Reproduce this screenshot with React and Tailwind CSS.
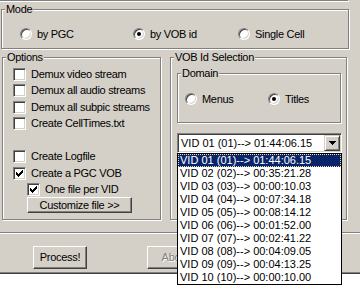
import React from "react";

const vids = [
  ["01", "01:44:06.15"],
  ["02", "00:35:21.28"],
  ["03", "00:00:10.03"],
  ["04", "00:07:34.18"],
  ["05", "00:08:14.12"],
  ["06", "00:01:52.00"],
  ["07", "00:02:41.22"],
  ["08", "00:04:09.05"],
  ["09", "00:04:13.25"],
  ["10", "00:00:10.00"],
];

const Group = ({ title, className, children }) => (
  <fieldset
    className={`border border-[#808080] shadow-[inset_1px_1px_0_#fff,1px_1px_0_#fff] ${className}`}
  >
    <legend className="ml-[3px] px-[1px] leading-[13px] bg-[#d4d0c8]">{title}</legend>
    {children}
  </fieldset>
);

const CheckBox = ({ checked, label, className = "" }) => (
  <div className={`flex items-center h-[13px] ${className}`}>
    <span className="w-[13px] h-[13px] shrink-0 bg-white border border-t-[#808080] border-l-[#808080] border-r-white border-b-white shadow-[inset_1px_1px_0_#404040,inset_-1px_-1px_0_#d4d0c8]">
      {checked && (
        <svg width="11" height="11" viewBox="0 0 11 11" shapeRendering="crispEdges" className="block">
          <rect x="2" y="4" width="1" height="3" fill="#000" />
          <rect x="3" y="5" width="1" height="3" fill="#000" />
          <rect x="4" y="6" width="1" height="3" fill="#000" />
          <rect x="5" y="5" width="1" height="3" fill="#000" />
          <rect x="6" y="4" width="1" height="3" fill="#000" />
          <rect x="7" y="3" width="1" height="3" fill="#000" />
          <rect x="8" y="2" width="1" height="3" fill="#000" />
        </svg>
      )}
    </span>
    <span className="ml-[5px] whitespace-nowrap">{label}</span>
  </div>
);

const Radio = ({ checked, label, className = "" }) => (
  <div className={`flex items-center h-[12px] shrink-0 ${className}`}>
    <span className="w-[12px] h-[12px] shrink-0 rounded-full bg-white border border-t-[#808080] border-l-[#808080] border-r-white border-b-white shadow-[inset_1px_1px_0_#404040,inset_-1px_-1px_0_#d4d0c8] flex items-center justify-center">
      {checked && <span className="w-[4px] h-[4px] rounded-full bg-black" />}
    </span>
    <span className="ml-[5px] whitespace-nowrap">{label}</span>
  </div>
);

const Button = ({ children, disabled, className = "" }) => (
  <div
    className={`flex items-center justify-center border border-t-white border-l-white border-r-[#404040] border-b-[#404040] shadow-[inset_-1px_-1px_0_#808080] ${className}`}
  >
    <span className={disabled ? "text-[#808080] [text-shadow:1px_1px_0_#fff]" : ""}>{children}</span>
  </div>
);

export default function App() {
  return (
    <div className="w-[360px] h-[300px] bg-white overflow-hidden relative font-['Liberation_Sans',Arial,sans-serif] text-[11px] leading-[13px] tracking-[-0.3px] text-black">
      <div className="h-[272px] bg-[#d4d0c8] flex flex-col">
        <div className="h-px w-[348px] bg-[#808080] shrink-0" />
        <div className="h-px w-[349px] bg-white shrink-0" />

        <Group title="Mode" className="ml-px mt-px w-[348px] h-[46px] shrink-0">
          <div className="flex mt-[12px] pl-[18px]">
            <Radio label="by PGC" className="w-[113px]" />
            <Radio checked label="by VOB id" className="w-[105px]" />
            <Radio label="Single Cell" />
          </div>
        </Group>

        <div className="flex mt-[2px] shrink-0">
          <Group title="Options" className="ml-[2px] w-[159px] h-[169px] shrink-0">
            <div className="flex flex-col pl-[10px]">
              <CheckBox label="Demux video stream" className="mt-[4px]" />
              <CheckBox label="Demux all audio streams" className="mt-[3px]" />
              <CheckBox label="Demux all subpic streams" className="mt-[4px]" />
              <CheckBox label="Create CellTimes.txt" className="mt-[3px]" />
              <CheckBox label="Create Logfile" className="mt-[20px]" />
              <CheckBox checked label="Create a PGC VOB" className="mt-[4px]" />
              <CheckBox checked label="One file per VID" className="mt-[3px] ml-[14px]" />
              <Button className="mt-[1px] ml-[14px] w-[105px] h-[16px]">Customize file &gt;&gt;</Button>
            </div>
          </Group>

          <Group title="VOB Id Selection" className="ml-[9px] w-[177px] h-[169px] shrink-0">
            <Group title="Domain" className="mt-[3px] ml-[6px] w-[164px] h-[56px]">
              <div className="flex mt-[13px] pl-[7px]">
                <Radio label="Menus" className="w-[83px]" />
                <Radio checked label="Titles" />
              </div>
            </Group>
            <div className="mt-[10px] ml-[6px] w-[165px] h-[20px] bg-white flex items-center border border-t-[#808080] border-l-[#808080] border-r-white border-b-white shadow-[inset_1px_1px_0_#404040,inset_-1px_-1px_0_#d4d0c8] p-px">
              <span className="flex-1 pl-[2px] tracking-normal whitespace-nowrap">VID 01 (01)--&gt; 01:44:06.15</span>
              <span className="w-[16px] h-[16px] bg-[#d4d0c8] flex items-center justify-center border border-t-[#d4d0c8] border-l-[#d4d0c8] border-r-[#404040] border-b-[#404040] shadow-[inset_1px_1px_0_#fff,inset_-1px_-1px_0_#808080]">
                <svg width="7" height="4" viewBox="0 0 7 4" shapeRendering="crispEdges">
                  <path d="M0 0h7v1h-1v1h-1v1h-1v1h-1v-1h-1v-1h-1v-1h-1z" fill="#000" />
                </svg>
              </span>
            </div>
          </Group>
        </div>

        <div className="mt-[12px] h-px bg-[#808080] shrink-0" />
        <div className="h-px bg-white shrink-0" />

        <div className="flex mt-[12px] shrink-0">
          <Button className="ml-[33px] w-[54px] h-[23px]">Process!</Button>
          <Button disabled className="ml-[60px] w-[54px] h-[23px]">Abort</Button>
        </div>
      </div>
      <div className="h-px bg-[#808080]" />
      <div className="h-px bg-[#404040]" />

      <div className="absolute left-[177px] top-[153px] w-[165px] h-[132px] bg-white border border-black tracking-normal">
        {vids.map(([n, t], i) => (
          <div
            key={n}
            className={`h-[13px] leading-[13px] pl-[2px] whitespace-nowrap ${
              i === 0
                ? "bg-[#0a246a] text-white outline outline-1 outline-dotted outline-[#e8e0a0] -outline-offset-1"
                : ""
            }`}
          >
            VID {n} ({n})--&gt; {t}
          </div>
        ))}
      </div>
    </div>
  );
}
